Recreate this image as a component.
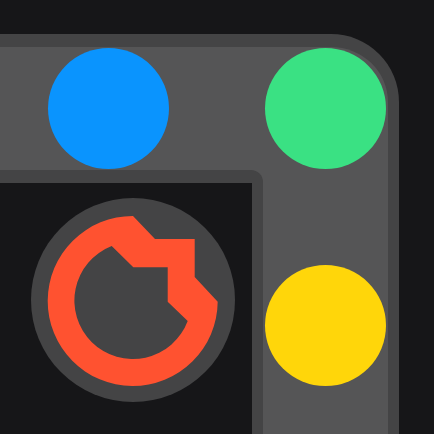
<div class="page">
  <div class="frame">
    <div class="top-row">
      <span class="dot blue"></span>
      <span class="dot green"></span>
    </div>
    <div class="lower-row">
      <div class="well">
        <div class="badge">
          <svg viewBox="0 0 204 204" width="204" height="204">
            <path
              fill="#ff5230"
              fill-rule="evenodd"
              d="M102 18 L124 41 L163.700 41 L163.700 79 L186.700 103.700 A85 85 0 1 1 102 18 Z M80.700 48 A58.500 58.500 0 1 0 156.700 123 L136.700 103.700 L136.700 69.300 L102.300 69.300 Z"
            />
          </svg>
        </div>
      </div>
      <span class="dot yellow"></span>
    </div>
  </div>
</div>

<style>
  :global(body) {
    margin: 0;
  }

  .page {
    width: 434px;
    height: 434px;
    overflow: hidden;
    background: #161618;
    padding-top: 34px;
    box-sizing: border-box;
  }

  .frame {
    width: 399px;
    height: 400px;
    box-sizing: border-box;
    background: #555556;
    border: solid #444445;
    border-width: 13px 11px 0 0;
    border-top-right-radius: 68px;
    overflow: hidden;
  }

  .top-row {
    display: flex;
    justify-content: flex-end;
    gap: 96px;
    padding: 1px 2px 0 0;
    height: 123px;
    box-sizing: border-box;
  }

  .dot {
    display: block;
    width: 121px;
    height: 121px;
    border-radius: 50%;
    flex: none;
  }

  .blue {
    background: #0a94fe;
  }

  .green {
    background: #3ae183;
  }

  .yellow {
    background: #ffd60a;
    margin-top: 95px;
  }

  .lower-row {
    display: flex;
    align-items: flex-start;
    justify-content: space-between;
    padding-right: 2px;
  }

  .well {
    width: 263px;
    height: 264px;
    flex: none;
    box-sizing: border-box;
    background: #161618;
    border: solid #444445;
    border-width: 13px 11px 0 0;
    border-top-right-radius: 12px;
    padding: 15px 0 0 31px;
  }

  .badge {
    width: 204px;
    height: 204px;
    border-radius: 50%;
    background: #444445;
  }

  svg {
    display: block;
  }
</style>
